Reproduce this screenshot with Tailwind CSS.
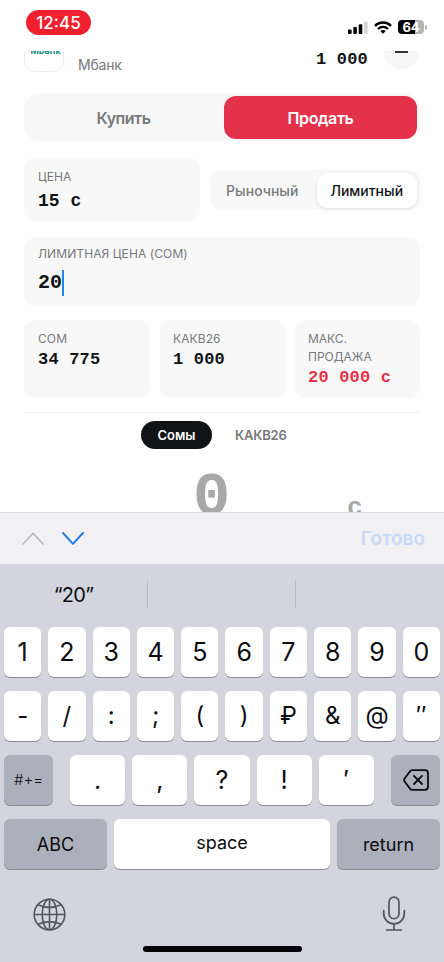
<!DOCTYPE html>
<html lang="ru">
<head>
<meta charset="utf-8">
<meta name="viewport" content="width=device-width, initial-scale=1">
<title>Лимитный ордер</title>
<script src="https://cdn.jsdelivr.net/npm/@tailwindcss/browser@4"></script>
</head>
<body class="bg-[#fefefe]">
<div class="w-[444px] h-[962px] overflow-hidden flex flex-col font-['Inter',sans-serif] text-[#111416]">
  <!-- Status bar -->
  <header class="h-[51px] shrink-0 flex items-start justify-between pl-[26px] pr-[17px]">
    <div class="mt-[10px] w-[65px] h-[25px] rounded-full bg-[#f0202f] text-white text-[17px] leading-[26px] font-medium text-center">12:45</div>
    <div class="mt-5 flex items-center gap-[6px]">
      <svg class="w-5 h-[13px]" viewBox="0 0 20 13"><rect x="0" y="8.5" width="3.6" height="4.5" rx="1"/><rect x="5.3" y="6" width="3.6" height="7" rx="1"/><rect x="10.7" y="3.2" width="3.6" height="9.8" rx="1"/><rect x="16" y="0.5" width="3.6" height="12.5" rx="1" fill="#d4d4d6"/></svg>
      <svg class="w-[18px] h-[13px]" viewBox="0 0 18 13" fill="none" stroke="#000" stroke-width="2.4"><path d="M1 4.8C5.4 .3 12.6 .3 17 4.8"/><path d="M4 8C6.8 5.2 11.2 5.2 14 8"/><path d="M9 12.8 6.3 10.1Q9 7.8 11.7 10.1Z" fill="#000" stroke="none"/></svg>
      <div class="flex items-center gap-[1px]">
        <div class="w-[26px] h-[14px] rounded-[4px] bg-linear-to-r from-black from-65% to-[#b5b5b7] to-65% text-white text-[13px] leading-[14px] font-bold text-center">64</div>
        <div class="w-[2px] h-[5px] rounded-r-full bg-[#b5b5b7]"></div>
      </div>
    </div>
  </header>

  <!-- Order form -->
  <main class="h-[461px] shrink-0 overflow-hidden px-6 flex flex-col">
    <div class="h-[42px] shrink-0 flex items-start">
      <div class="-mt-[20px] w-[40px] h-[41px] shrink-0 rounded-xl border border-[#ececef] bg-white flex items-center justify-center pb-[2px] text-[9px] leading-[10px] font-bold text-[#16907f]"><span class="text-[#d5d428]">·</span>Мbank</div>
      <div class="ml-[14px] mt-[4px] text-[14px] leading-5 tracking-[-0.2px] text-[#77797b] grow">Мбанк</div>
      <div class="-mt-px font-['Liberation_Mono',monospace] font-bold text-[17px] leading-5 tracking-[0.2px]">1 000</div>
      <div class="ml-[16px] -mt-[17px] mr-[1px] w-[35px] h-[35px] rounded-full bg-[#f6f6f7] flex items-center justify-center"><div class="w-[13px] h-[2px] bg-[#333]"></div></div>
    </div>
    <div class="h-[48px] w-[396px] shrink-0 rounded-2xl bg-[#f8f8f9] p-[3px] flex text-[16px] font-semibold text-center leading-[44px]">
      <div class="w-[193px] text-[#77797b] tracking-[-0.5px]">Купить</div>
      <div class="ml-[4px] w-[193px] h-[43px] rounded-xl bg-[#e33249] text-white tracking-[-0.4px]">Продать</div>
    </div>
    <div class="mt-[17px] shrink-0 flex items-center gap-[10px]">
      <div class="w-[176px] h-[63px] rounded-xl bg-[#f8f8f9] px-[14px] pt-[10px]">
        <div class="text-[12px] leading-[18px] tracking-[0.1px] text-[#77797b]">ЦЕНА</div>
        <div class="mt-px font-['Liberation_Mono',monospace] font-bold text-[18px] leading-[28px]">15 с</div>
      </div>
      <div class="w-[210px] h-[40px] rounded-xl bg-[#f8f8f9] p-[3px] flex text-[14px] leading-[35px] text-center">
        <div class="w-[99px] mr-[5px] text-[#77797b] font-medium">Рыночный</div>
        <div class="w-[101px] h-[35px] rounded-[10px] bg-white shadow-[0_1px_4px_rgba(0,0,0,0.1)] font-medium">Лимитный</div>
      </div>
    </div>
    <div class="mt-[16px] w-[396px] h-[69px] shrink-0 rounded-xl bg-[#f8f8f9] px-[14px] pt-[8px]">
      <div class="text-[12px] leading-[18px] tracking-[0.1px] text-[#77797b]">ЛИМИТНАЯ ЦЕНА (СОМ)</div>
      <div class="mt-[6px] flex items-center font-['Liberation_Mono',monospace] font-bold text-[20px] leading-[28px]">20<span class="w-[2px] h-[26px] bg-[#2186ee]"></span></div>
    </div>
    <div class="mt-[14px] shrink-0 flex gap-[10px]">
      <div class="w-[126px] h-[78px] rounded-xl bg-[#f8f8f9] px-[14px] pt-[10px]">
        <div class="text-[12px] leading-[17px] tracking-[0.1px] text-[#77797b]">СОМ</div>
        <div class="font-['Liberation_Mono',monospace] font-bold text-[17px] leading-[26px] tracking-[0.2px]">34 775</div>
      </div>
      <div class="w-[125px] h-[78px] rounded-xl bg-[#f8f8f9] px-[13px] pt-[10px]">
        <div class="text-[12px] leading-[17px] tracking-[0.1px] text-[#77797b]">КАКВ26</div>
        <div class="font-['Liberation_Mono',monospace] font-bold text-[17px] leading-[26px] tracking-[0.2px]">1 000</div>
      </div>
      <div class="w-[125px] h-[78px] rounded-xl bg-[#f8f8f9] px-[13px] pt-[10px] whitespace-nowrap">
        <div class="text-[12px] leading-[17.5px] tracking-[0px] text-[#77797b]">МАКС.<br>ПРОДАЖА</div>
        <div class="font-['Liberation_Mono',monospace] font-bold text-[17px] leading-[26px] tracking-[0.2px] text-[#e33249]">20 000 с</div>
      </div>
    </div>
    <div class="mt-[14px] h-px shrink-0 bg-[#f2f2f4]"></div>
    <div class="mt-[8px] shrink-0 pl-[117px] flex text-[13px] leading-[28px] font-semibold">
      <div class="w-[71px] h-[28px] rounded-full bg-[#111416] text-white text-center">Сомы</div>
      <div class="ml-[23px] text-[#77797b] tracking-[-0.2px]">КАКВ26</div>
    </div>
    <div class="shrink-0 flex items-start font-['Liberation_Mono',monospace] font-bold text-[#a8a8aa]">
      <div class="ml-[169px] w-[154px] text-[62px] leading-[97px]">0</div>
      <div class="mt-[44px] text-[26px] leading-[30px]">с</div>
    </div>
  </main>

  <!-- Input accessory -->
  <div class="h-[52px] shrink-0 bg-[#f1f1f3] border-t border-[#dcdcde] flex items-center pl-[22px] pr-[19px]">
    <svg class="w-[22px] h-[13px]" viewBox="0 0 22 13" fill="none" stroke="#bcbcbf" stroke-width="1.7" stroke-linecap="round" stroke-linejoin="round"><path d="M1 12 11 1.3 21 12"/></svg>
    <svg class="ml-[18px] w-[22px] h-[13px]" viewBox="0 0 22 13" fill="none" stroke="#1c78e8" stroke-width="1.9" stroke-linecap="round" stroke-linejoin="round"><path d="M1 1 11 11.8 21 1"/></svg>
    <div class="grow pt-[2px] text-right text-[19px] font-semibold text-[#c6daf5]">Готово</div>
  </div>

  <!-- Keyboard -->
  <section class="h-[398px] shrink-0 bg-[#d3d4dd] text-[#0c0c10] flex flex-col">
    <div class="h-[63px] shrink-0 flex items-center pb-[3px]">
      <div class="w-[147px] pt-px text-center text-[20px] tracking-[-0.7px]">“20”</div>
      <div class="w-[149px] h-[29px] border-x border-[#bcbdc6]"></div>
    </div>
    <div class="px-[4px] grid grid-cols-10 gap-x-[7px] text-[25px] leading-[51px] text-center *:h-[50px] *:rounded-[6px] *:bg-white *:shadow-[0_1px_0_#8b8c92]">
      <div>1</div><div>2</div><div>3</div><div>4</div><div>5</div><div>6</div><div>7</div><div>8</div><div>9</div><div>0</div>
    </div>
    <div class="mt-[14px] px-[4px] grid grid-cols-10 gap-x-[7px] text-[24px] leading-[49px] text-center *:h-[50px] *:rounded-[6px] *:bg-white *:shadow-[0_1px_0_#8b8c92]">
      <div>-</div><div>/</div><div>:</div><div>;</div><div>(</div><div>)</div><div>₽</div><div>&amp;</div><div>@</div><div>″</div>
    </div>
    <div class="mt-[14px] px-[4px] flex justify-between text-[25px] leading-[50px] text-center">
      <div class="w-[49px] h-[50px] rounded-[6px] bg-[#abb0bc] shadow-[0_1px_0_#8b8c92] text-[15px] font-light">#+=</div>
      <div class="w-[304px] grid grid-cols-5 gap-x-[7px] *:h-[50px] *:rounded-[6px] *:bg-white *:shadow-[0_1px_0_#8b8c92]">
        <div>.</div><div>,</div><div>?</div><div>!</div><div>′</div>
      </div>
      <div class="w-[49px] h-[50px] rounded-[6px] bg-[#abb0bc] shadow-[0_1px_0_#8b8c92] flex items-center justify-center">
        <svg class="w-[26px] h-[22px]" viewBox="0 0 26 22" fill="none" stroke="#0c0c10" stroke-width="1.8" stroke-linecap="round" stroke-linejoin="round"><path d="M9.5 1.2H22Q25 1.2 25 4.2V17.8Q25 20.8 22 20.8H9.5Q8 20.8 7 19.6L1.6 12.5Q.6 11 1.6 9.5L7 2.4Q8 1.2 9.5 1.2Z"/><path d="M11 6.8 19 15M19 6.8 11 15"/></svg>
      </div>
    </div>
    <div class="mt-[14px] px-[4px] flex justify-between text-[18px] leading-[51px] text-center *:h-[50px] *:rounded-[6px] *:shadow-[0_1px_0_#8b8c92]">
      <div class="w-[103px] bg-[#abb0bc]">ABC</div>
      <div class="w-[216px] bg-white leading-[47px]">space</div>
      <div class="w-[103px] bg-[#abb0bc]">return</div>
    </div>
    <div class="mt-[27px] pl-[33px] pr-[38px] flex justify-between items-start">
      <svg class="mt-[2px] w-[33px] h-[33px]" viewBox="0 0 33 33" fill="none" stroke="#54565e" stroke-width="1.6"><circle cx="16.5" cy="16.5" r="15.3"/><ellipse cx="16.5" cy="16.5" rx="7.3" ry="15.3"/><path d="M16.5 1.2V31.8M1.2 16.5H31.8M5 6.7Q16.5 12 28 6.7M5 26.3Q16.5 21 28 26.3"/></svg>
      <svg class="w-[24px] h-[36px]" viewBox="0 0 24 36" fill="none" stroke="#54565e" stroke-width="1.7" stroke-linecap="round"><rect x="7" y="1.2" width="10" height="21.5" rx="5"/><path d="M1.7 14.5V17.5A10.3 10.3 0 0 0 22.3 17.5V14.5M12 28V34M4.7 34H19.3"/></svg>
    </div>
    <div class="mt-[14px] ml-[143px] w-[159px] h-[6px] rounded-full bg-[#020206]"></div>
  </section>
</div>
</body>
</html>
